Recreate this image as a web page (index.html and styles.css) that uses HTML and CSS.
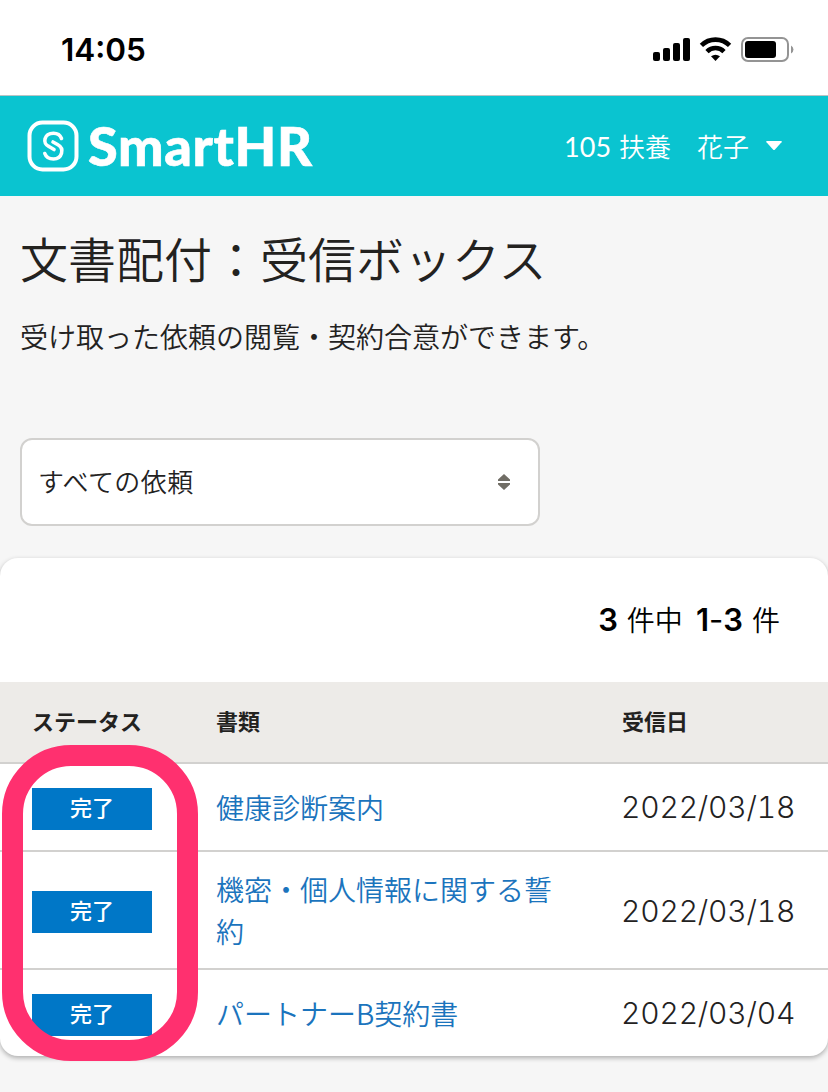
FILE: index.html
```html
<!DOCTYPE html>
<html lang="ja">
<head>
<meta charset="utf-8">
<title>SmartHR</title>
<link rel="stylesheet" href="styles.css">
</head>
<body>
<div class="status-bar">
  <span class="clock">14:05</span>
  <svg class="status-icons" width="144" height="28" viewBox="0 0 144 28">
    <rect x="3" y="15" width="7" height="9" rx="2"/>
    <rect x="13" y="11" width="7" height="13" rx="2"/>
    <rect x="23" y="6" width="7" height="18" rx="2"/>
    <rect x="33" y="1" width="7" height="23" rx="2"/>
    <g fill="none" stroke="#000" stroke-width="4.6">
      <path d="M51.4 8.4A20 20 0 0 1 79.6 8.4"/>
      <path d="M57 14.6A12 12 0 0 1 74 14.6"/>
    </g>
    <path d="M61 19.2Q65.500 16.200 70 19.200L65.500 24Z"/>
    <rect x="92" y="1" width="46" height="23" rx="6" fill="none" stroke="#949494" stroke-width="2"/>
    <rect x="95" y="4" width="31" height="17" rx="3"/>
    <path d="M141 8.500a4.500 4.500 0 0 1 0 8z" fill="#949494"/>
  </svg>
</div>
<header class="app-header">
  <svg class="logo" width="290" height="56" viewBox="0 0 290 56">
    <rect x="4.500" y="4.500" width="47" height="47" rx="13" fill="none" stroke="#fff" stroke-width="4"/>
    <g fill="none" stroke="#fff" stroke-width="3.600" stroke-linecap="round">
      <path d="M36.500 20.500C35 16.500 32 15.200 28.500 15.200C19 15.200 17 25.500 24 28.500L29 31.500"/>
      <path d="M28 24L32.500 26.500C40 30.500 37 41 28.500 41C24 41 21 39 19.800 35.500"/>
    </g>
    <text class="logo-text" x="63" y="47.500" textLength="224" lengthAdjust="spacing">SmartHR</text>
  </svg>
  <div class="user"><span><b>105</b> 扶養</span><span>花子</span>
    <svg width="18" height="12" viewBox="0 0 18 12"><path d="M2 1H16Q17.500 1 16.500 2.200L10 9.500Q9 10.500 8 9.500L1.500 2.200Q.5 1 2 1Z" fill="#fff"/></svg>
  </div>
</header>
<main>
  <section class="intro">
    <h1>文書配付：受信ボックス</h1>
    <p>受け取った依頼の閲覧・契約合意ができます。</p>
    <div class="select"><span>すべての依頼</span>
      <svg width="12" height="16" viewBox="0 0 12 16"><path d="M6 0L12 5.500V7H0V5.500ZM0 9H12V10.500L6 16L0 10.500Z" fill="#706d65"/></svg>
    </div>
  </section>
  <section class="card">
    <div class="count"><b>3</b><span>件中</span><b class="range">1<i>-</i>3</b><span>件</span></div>
    <div class="row head"><span>ステータス</span><span>書類</span><span>受信日</span></div>
    <div class="row"><span class="badge">完了</span><a>健康診断案内</a><time>2022/03/18</time></div>
    <div class="row tall"><span class="badge">完了</span><a>機密・個人情報に関する誓約</a><time>2022/03/18</time></div>
    <div class="row last"><span class="badge">完了</span><a>パートナーB契約書</a><time>2022/03/04</time></div>
    <div class="highlight"></div>
  </section>
</main>
</body>
</html>
```
FILE: styles.css
```css
* { box-sizing: border-box; }
body {
  margin: 0;
  background: #f6f6f6;
  color: #23221f;
  font-family: "Noto Sans CJK JP", sans-serif;
  font-weight: 350;
  height: 1092px;
  overflow: hidden;
}
.status-bar {
  height: 96px;
  background: #fff;
  border-bottom: 1px solid #b9c4c5;
  display: flex;
  justify-content: space-between;
  padding: 37px 34px 0 61px;
}
.clock { font: 600 31.5px/26px Inter, sans-serif; color: #000; }
.app-header {
  height: 100px;
  background: #0ac4d0;
  display: flex;
  align-items: center;
  justify-content: space-between;
  padding: 0 45px 0 25px;
}
.logo { overflow: visible; }
.logo-text { font: 900 54px Lato, sans-serif; fill: #fff; stroke: #fff; stroke-width: .6px; }
.user { display: flex; align-items: center; color: #fff; font-size: 26px; }
.user span { padding-bottom: 2px; }
.user b { font: 400 27px Lato, sans-serif; letter-spacing: .1px; margin-right: 2px; }
.user span + span { margin-left: 26px; }
.user svg { margin-left: 16px; }
.intro { height: 362px; padding: 26px 20px 0; }
h1 { margin: 0; font-size: 48px; line-height: 70px; font-weight: 350; white-space: nowrap; }
p { margin: 23px 0 0; font-size: 28px; line-height: 42px; }
.select {
  margin-top: 81px;
  width: 520px;
  height: 88px;
  border: 2px solid #d2d1cf;
  border-radius: 12px;
  background: #fff;
  display: flex;
  align-items: center;
  justify-content: space-between;
  padding: 0 28px 0 16px;
  font-size: 26px;
}
.select span { padding-bottom: 3px; letter-spacing: .4px; }
.card {
  position: relative;
  height: 498px;
  background: #fff;
  border-radius: 18px;
  box-shadow: 0 2px 5px rgba(0, 0, 0, .3);
}
.count {
  height: 124px;
  display: flex;
  align-items: center;
  justify-content: flex-end;
  padding: 0 48px 2px 0;
  gap: 9px;
  font-size: 28px;
  color: #000;
}
.count b { font: 600 31px Inter, sans-serif; }
.count .range { margin-left: 4px; }
.count i { font-style: normal; font-weight: 400; }
.row {
  display: grid;
  grid-template-columns: 184px 406px 1fr;
  align-items: center;
  height: 88px;
  padding-left: 32px;
  border-bottom: 2px solid #d2d1cf;
}
.head { height: 82px; background: #edebe8; font-size: 22px; font-weight: 700; padding-bottom: 4px; }
.tall { height: 118px; }
.last { border: 0; height: 86px; }
.badge {
  width: 120px;
  height: 42px;
  margin-top: 4px;
  background: #0077c7;
  color: #fff;
  font-size: 22px;
  font-weight: 500;
  line-height: 37px;
  text-align: center;
}
.row a { color: #1b74bd; font-size: 28px; line-height: 42px; width: 340px; }
time { font: 300 30px Inter, sans-serif; font-feature-settings: "tnum"; letter-spacing: -.2px; margin-left: -1px; }
.tall time { padding-top: 2px; }
.highlight {
  position: absolute;
  left: 2px;
  top: 187px;
  width: 196px;
  height: 316px;
  border: 21px solid #ff306f;
  border-radius: 69px;
}
```
